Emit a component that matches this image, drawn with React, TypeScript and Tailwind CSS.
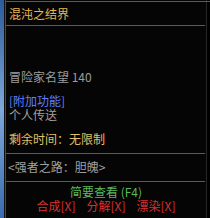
const font = { fontFamily: '"Noto Sans CJK SC", "Liberation Sans", sans-serif' };

function Line() {
  return <div className="h-[1px] w-[199px] bg-[#5a5a5a]" />;
}

export default function App() {
  return (
    <div className="flex h-[218px] w-[210px] bg-black text-[12px] leading-[14px]" style={font}>
      <div className="w-[4px] bg-gradient-to-b from-[#2d5a9a] via-[#7fa9d9] to-[#3a6bb0]" />
      <div className="w-[1px] bg-[#111]" />
      <div className="flex w-[202px] flex-col border-l border-r border-[#4a4a4a] border-r-[#262626] bg-[#050505]">
        <div className="h-[1px]" />
        <div className="h-[1px] w-[205px] bg-[#5a5a5a]" />
        <div className="flex h-[23px] items-center pl-[3px] text-[#e8b850]">混沌之结界</div>
        <Line />
        <div className="mt-[44px] pl-[3px] text-[#9c9c9c]">冒险家名望 140</div>
        <div className="mt-[10px] pl-[3px] text-[#5f7fff]">[附加功能]</div>
        <div className="pl-[3px] text-[#a0a0a0]">个人传送</div>
        <div className="mt-[10px] pl-[3px] text-[#e0c068]">剩余时间：无限制</div>
        <div className="mt-[7px]">
          <Line />
        </div>
        <div className="mt-[6px] pl-[2px] text-[#a0a0a0]">&lt;强者之路：胆魄&gt;</div>
        <div className="mt-[7px]">
          <Line />
        </div>
        <div className="mt-[3px] text-center text-[#5cb85c]">简要查看 (F4)</div>
        <div className="flex justify-center gap-[11px] text-[#d83030]">
          <span>合成[X]</span>
          <span>分解[X]</span>
          <span>漂染[X]</span>
        </div>
      </div>
    </div>
  );
}
